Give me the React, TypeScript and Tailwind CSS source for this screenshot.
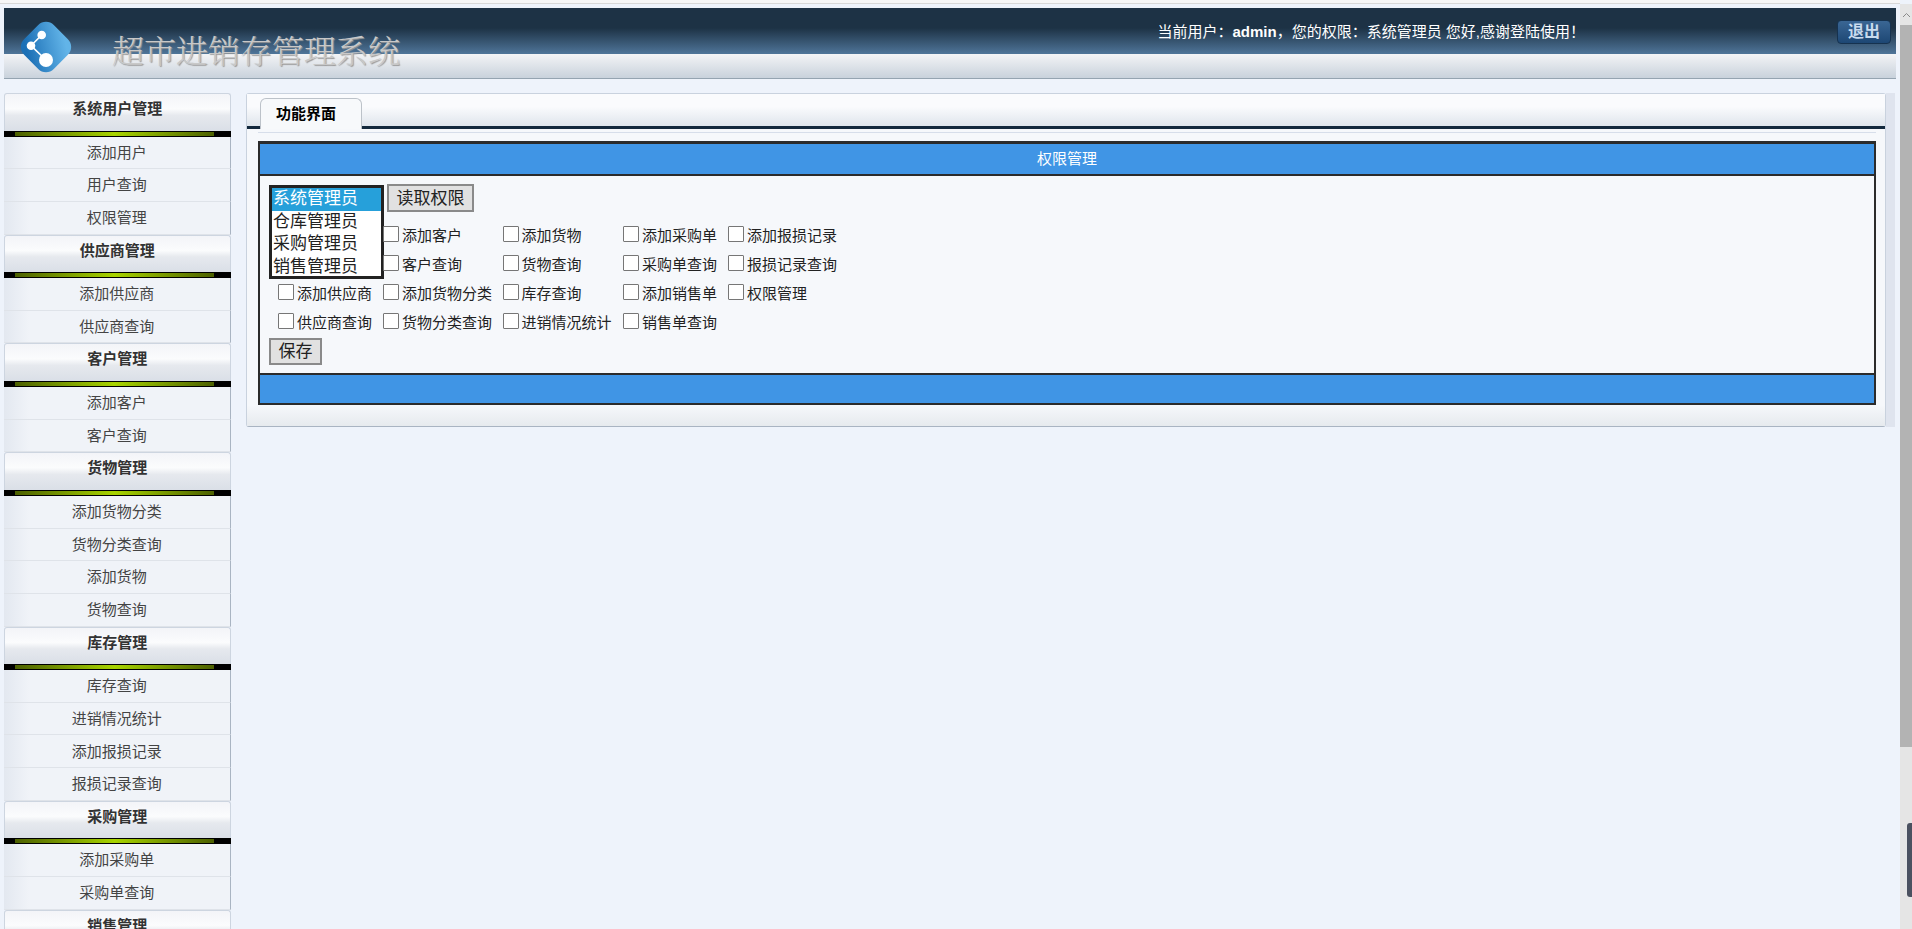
const menu = [
  { title: "系统用户管理", items: ["添加用户", "用户查询", "权限管理"] },
  { title: "供应商管理", items: ["添加供应商", "供应商查询"] },
  { title: "客户管理", items: ["添加客户", "客户查询"] },
  { title: "货物管理", items: ["添加货物分类", "货物分类查询", "添加货物", "货物查询"] },
  { title: "库存管理", items: ["库存查询", "进销情况统计", "添加报损记录", "报损记录查询"] },
  { title: "采购管理", items: ["添加采购单", "采购单查询"] },
  { title: "销售管理", items: [] },
];

// reads left to right, the select covers the first column of the first rows
const permissions = [
  "添加客户", "添加货物", "添加采购单", "添加报损记录",
  "客户查询", "货物查询", "采购单查询", "报损记录查询",
  "添加供应商", "添加货物分类", "库存查询", "添加销售单", "权限管理",
  "供应商查询", "货物分类查询", "进销情况统计", "销售单查询",
];

const firstColumn = ["添加供应商", "供应商查询"];
const roles = ["系统管理员", "仓库管理员", "采购管理员", "销售管理员"];

function Logo() {
  return (
    <svg width="52" height="52" viewBox="0 0 52 52" className="shrink-0">
      <defs>
        <linearGradient id="logoBlue" x1="0.75" y1="0.1" x2="0.25" y2="0.9">
          <stop offset="0" stopColor="#62b4e8" />
          <stop offset="1" stopColor="#1c70b6" />
        </linearGradient>
      </defs>
      <rect x="5" y="5" width="42" height="42" rx="11" fill="url(#logoBlue)" transform="rotate(45 26 26)" />
      <path d="M21.7 14 L11 24.7 L26 39" fill="none" stroke="#ffffff" strokeWidth="1.6" />
      <circle cx="21.7" cy="14" r="4.3" fill="#ffffff" />
      <circle cx="11" cy="24.7" r="4.3" fill="#ffffff" />
      <circle cx="26" cy="39" r="7" fill="#ffffff" />
    </svg>
  );
}

function Sidebar() {
  return (
    <div className="w-[226.5px] shrink-0">
      {menu.map((group) => (
        <div key={group.title}>
          <div className="h-[37.5px] pt-[6px] text-center text-[15px] leading-[18px] font-bold text-[#333] border-t border-x border-[#cdd5e0] rounded-t-[3px] bg-[linear-gradient(to_bottom,#f3f4f8_0%,#fbfcfd_40%,#e6e9ee_58%,#dadfe7_100%)]">
            {group.title}
          </div>
          <div className="h-[6px] bg-black pl-[11px] pr-[17px] pt-px">
            <div className="h-[4px] bg-[linear-gradient(to_right,#4c6000,#a8d400_50%,#4c6000)]" />
          </div>
          {group.items.map((item) => (
            <div
              key={item}
              className="h-[32.7px] pt-px flex items-center justify-center text-[15px] text-[#444] border-b border-r border-[#dfe3e9] border-r-[#a9b4c2] bg-[linear-gradient(to_right,#e3e8f0,#f0f3f8_25px)]"
            >
              {item}
            </div>
          ))}
        </div>
      ))}
    </div>
  );
}

function PermissionCell({ label }: { label: string }) {
  return (
    <label className={`flex items-start pt-[5px] gap-[3px] text-[15px] leading-[22px] text-[#222] ${firstColumn.includes(label) ? "pl-[10px]" : ""}`}>
      <input type="checkbox" className="appearance-none w-4 h-4 -ml-px mt-px bg-white border border-[#767676] rounded-[1px] shrink-0" />
      {label}
    </label>
  );
}

function PermissionTable() {
  return (
    <div className="border-2 border-t-[3px] border-[#2b2b2b]">
      <div className="h-[30px] bg-[#4095e5] flex items-center justify-center text-white text-[15px]">权限管理</div>
      <div className="h-[201px] border-y-2 border-[#2b2b2b] bg-[#f6f8fb] pl-[9px] pt-[8px]">
        <div className="grid grid-cols-[115px_119.5px_120.5px_105px_200px] grid-rows-[35.5px_29px_29px_29px_29px]">
          <div className="row-span-3 self-start mt-px w-[115px] h-[94px] border-[3px] border-[#222] bg-white text-[17px] leading-[22.5px] text-[#222]">
            {roles.map((role, i) => (
              <div key={role} className={i === 0 ? "pl-px bg-[#26a0da] text-white" : "pl-px"}>
                {role}
              </div>
            ))}
          </div>
          <div className="col-span-4 self-start ml-[3px]">
            <button className="w-[87px] h-[28px] border-2 border-[#8a8a8a] bg-[#e1e1e1] text-[17px] leading-none text-[#222]">读取权限</button>
          </div>
          {permissions.map((p) => (
            <PermissionCell key={p} label={p} />
          ))}
        </div>
        <button className="mt-[2.5px] w-[53px] h-[27px] border-2 border-[#8a8a8a] bg-[#e1e1e1] text-[17px] leading-none text-[#222]">保存</button>
      </div>
      <div className="h-[28px] bg-[#4095e5]" />
    </div>
  );
}

function Panel() {
  return (
    <div className="flex-1 flex self-start mr-[5px]">
      <div className="flex-1 border border-[#c9d2de] border-b-[#a9b4c2] rounded-[3px] bg-[#f6f8fb]">
        <div className="h-[35px] flex items-end pl-[13px] border-b-[3px] border-[#13293d] bg-[linear-gradient(to_bottom,#fafbfd_0%,#fafbfd_40%,#dfe5ec_100%)]">
          <div className="w-[102px] h-[31px] -mb-[3px] pl-[15px] flex items-center text-[15px] font-bold text-black bg-[#f7f9fb] border border-b-0 border-[#bcc2c9] rounded-t-[6px]">
            功能界面
          </div>
        </div>
        <div className="ml-[11px] mr-[9px] mt-[3px] border-t border-[#d7deea] pt-[8px]">
          <PermissionTable />
        </div>
        <div className="h-[21px] bg-[linear-gradient(to_bottom,#f6f8fb,#e6eaee)]" />
      </div>
      <div className="w-[9px] bg-[#dfe4ee]" />
    </div>
  );
}

function Scrollbar() {
  return (
    <div className="relative w-3 shrink-0 mt-[4px] flex flex-col bg-[#e5e5e5]">
      <div className="h-[21px] flex items-center justify-center">
        <svg width="9" height="6" viewBox="0 0 9 6">
          <path d="M1 5 L4.5 1.5 L8 5" fill="none" stroke="#8a8a8a" strokeWidth="1" />
        </svg>
      </div>
      <div className="h-[722px] bg-[#b3b3b3]" />
      <div className="absolute right-0 top-[819px] w-[5px] h-[74px] rounded-l-[3px] bg-[#4b5160]" />
    </div>
  );
}

export default function App() {
  return (
    <div className="h-[929px] overflow-hidden flex bg-[#eef3fb] font-['Liberation_Sans','Noto_Sans_CJK_SC',sans-serif]">
      <div className="flex-1 min-w-0">
        <div className="h-[4px] bg-[#f6f6f6] border-b border-[#d8d8d8]" />
        <div className="mt-[4px] ml-[4px] mr-[4px] h-[71px] border-b border-[#95a4b1] flex items-start bg-[linear-gradient(to_bottom,#1d3245_0px,#1d3245_20px,#4f7599_46px,#f3f4f6_46px,#c9d2dc_70px)]">
          <div className="ml-[16px] mt-[13px]">
            <Logo />
          </div>
          <div className="ml-[40px] mt-[21px] text-[32px] leading-[40px] font-light text-[#c8c8c8] [text-shadow:1px_1px_1px_#9a9a9a] font-['Noto_Serif_CJK_SC','Liberation_Serif','Noto_Sans_CJK_SC',serif]">
            超市进销存管理系统
          </div>
          <div className="ml-auto mt-[14px] text-[15px] leading-[20px] text-white">
            当前用户：<span className="font-bold">admin</span>，您的权限：系统管理员 您好,感谢登陆使用！
          </div>
          <button className="ml-[252px] mr-[5px] mt-[12px] w-[54px] h-[24px] rounded-[4px] border border-[#16324f] bg-[linear-gradient(to_bottom,#3a6694,#1d4774)] text-[16px] leading-none font-bold text-[#c9dbee]">
            退出
          </button>
        </div>
        <div className="mt-[14px] ml-[4px] flex gap-[15.5px]">
          <Sidebar />
          <Panel />
        </div>
      </div>
      <Scrollbar />
    </div>
  );
}
